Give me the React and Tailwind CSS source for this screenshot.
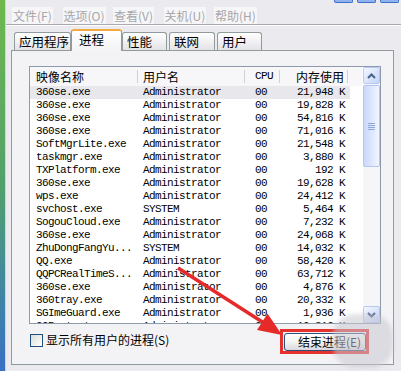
import { Fragment } from 'react';

const rows = [
  ['360se.exe', 'Administrator', '00', '21,948 K'],
  ['360se.exe', 'Administrator', '00', '19,828 K'],
  ['360se.exe', 'Administrator', '00', '54,816 K'],
  ['360se.exe', 'Administrator', '00', '71,016 K'],
  ['SoftMgrLite.exe', 'Administrator', '00', '21,548 K'],
  ['taskmgr.exe', 'Administrator', '00', '3,880 K'],
  ['TXPlatform.exe', 'Administrator', '00', '192 K'],
  ['360se.exe', 'Administrator', '00', '19,628 K'],
  ['wps.exe', 'Administrator', '00', '24,412 K'],
  ['svchost.exe', 'SYSTEM', '00', '5,464 K'],
  ['SogouCloud.exe', 'Administrator', '00', '7,232 K'],
  ['360se.exe', 'Administrator', '00', '24,068 K'],
  ['ZhuDongFangYu...', 'SYSTEM', '00', '14,032 K'],
  ['QQ.exe', 'Administrator', '00', '58,420 K'],
  ['QQPCRealTimeS...', 'Administrator', '00', '63,712 K'],
  ['360se.exe', 'Administrator', '00', '4,876 K'],
  ['360tray.exe', 'Administrator', '00', '20,332 K'],
  ['SGImeGuard.exe', 'Administrator', '00', '1,936 K'],
  ['QQProtect.exe', 'Administrator', '00', '10,316 K'],
];

const menus = ['文件(F)', '选项(O)', '查看(V)', '关机(U)', '帮助(H)'];

function Chevron({ down }) {
  return (
    <svg width="9" height="6" viewBox="0 0 9 6" aria-hidden>
      <polyline
        points={down ? '1,1 4.5,4.5 8,1' : '1,5 4.5,1.5 8,5'}
        fill="none"
        stroke="#4d6185"
        strokeWidth="2"
      />
    </svg>
  );
}

function ScrollButton({ down }) {
  return (
    <div className="flex h-[17px] items-center justify-center rounded-[2px] border border-[#b7c9ef] bg-gradient-to-br from-[#f4f7ff] to-[#c4d5fa]">
      <Chevron down={down} />
    </div>
  );
}

function Tab({ label, width, selected, className = '' }) {
  if (selected) {
    return (
      <div
        className={`relative z-10 -mb-px flex h-[22px] items-center whitespace-nowrap rounded-t-[3px] border-x border-t-2 border-x-[#919b9c] border-t-[#f3a942] bg-gradient-to-b from-white to-[#f3f2f5] pb-[2px] pl-[7px] text-[12.5px] text-black ${width} ${className}`}
      >
        {label}
      </div>
    );
  }
  return (
    <div
      className={`flex h-[18px] items-center whitespace-nowrap rounded-t-[3px] border border-b-0 border-[#919b9c] bg-gradient-to-b from-white to-[#e4e3e8] pl-[4px] pt-[1px] text-[12.5px] text-black ${width} ${className}`}
    >
      {label}
    </div>
  );
}

export default function App() {
  return (
    <div className="relative flex h-[371px] w-[401px] overflow-hidden bg-[#ebeaee] font-['Noto_Sans_CJK_SC',sans-serif]">
      <div className="w-[5px] shrink-0 bg-gradient-to-b from-[#6fb84c] via-[#52a06a] to-[#3a6fc4]" />
      <div className="flex min-w-0 flex-1 flex-col border-l border-[#d3d3da]">
        {/* bottom edge of the title bar buttons */}
        <div className="flex h-[3px] justify-end gap-[4px] pr-[2px]">
          <div className="w-[19px] rounded-b-[2px] border-x border-b border-[#3e6fc6] bg-[#8fb3ef]" />
          <div className="w-[19px] rounded-b-[2px] border-x border-b border-[#3e6fc6] bg-[#8fb3ef]" />
          <div className="w-[19px] rounded-b-[2px] border-x border-b border-[#3e6fc6] bg-[#8fb3ef]" />
        </div>

        <div className="flex h-[21px] items-center pl-[6px]">
          {menus.map((m) => (
            <div key={m} className="w-[50.5px] shrink-0">
              <span className="bg-[#f6f6f8] px-px text-[12px] leading-[16px] text-[#a6a6ab]">{m}</span>
            </div>
          ))}
        </div>
        <div className="h-[2px] border-t border-b border-t-[#a9a9af] border-b-white" />

        <div className="flex h-[24px] items-end pl-[8px] pt-[3px]">
          <Tab label="应用程序" width="w-[57px]" />
          <Tab label="进程" width="w-[51px]" selected />
          <Tab label="性能" width="w-[45px]" />
          <Tab label="联网" width="w-[46px]" className="ml-[2px]" />
          <Tab label="用户" width="w-[45px]" className="ml-[2px]" />
        </div>

        <div className="ml-[5px] h-[315px] w-[383px] border border-[#919b9c] bg-[#f3f2f5] pl-[17px] pt-[15px]">
          <div className="flex h-[258px] w-[352px] border border-[#8e9aab] bg-white">
            <div className="w-[332px] overflow-hidden">
              <div className="flex h-[19px] items-center bg-[#f7f7f9] text-[12px] text-black">
                <div className="w-[108px] border-r border-[#d0d0d6] pl-[6px] leading-[13px]">映像名称</div>
                <div className="w-[107px] border-r border-[#d0d0d6] pl-[5px] leading-[13px]">用户名</div>
                <div className="w-[35px] border-r border-[#d0d0d6] pl-[10px] font-['Liberation_Mono',monospace] text-[11px] leading-[13px] tracking-[-0.6px]">
                  CPU
                </div>
                <div className="w-[68px] border-r border-[#d0d0d6] pr-[3px] text-right leading-[13px]">内存使用</div>
              </div>
              {rows.map((r, i) => (
                <div
                  key={i}
                  className={`flex h-[13px] w-[320px] items-center font-['Liberation_Mono',monospace] text-[11px] leading-[13px] tracking-[-0.6px] text-black ${
                    i === 0 ? 'bg-[#e8e7ec]' : ''
                  }`}
                >
                  <div className="w-[108px] whitespace-nowrap pl-[6px]">{r[0]}</div>
                  <div className="w-[107px] whitespace-nowrap pl-[5px]">{r[1]}</div>
                  <div className="w-[35px] pl-[10px]">{r[2]}</div>
                  <div className="w-[70px] whitespace-pre pr-[5px] text-right">{r[3]}</div>
                </div>
              ))}
            </div>
            <div className="ml-px flex w-[17px] flex-col bg-[#f6f6f8]">
              <ScrollButton />
              <div className="mt-px flex h-[82px] flex-col items-center justify-center gap-[1px] rounded-[2px] border border-[#b2c5ef] bg-gradient-to-r from-[#c9d9fb] via-[#dce6fd] to-[#f2f6ff]">
                {[0, 1, 2, 3].map((k) => (
                  <Fragment key={k}>
                    <div className="h-px w-[7px] bg-[#8fa7d9]" />
                  </Fragment>
                ))}
              </div>
              <div className="flex-1" />
              <ScrollButton down />
            </div>
          </div>

          <div className="mt-[9px] flex w-[352px] items-start">
            <div className="flex items-center pl-px">
              <div className="h-[13px] w-[13px] border border-[#1f4f7e] bg-gradient-to-br from-[#dcdcd6] to-white" />
              <span className="ml-[3px] text-[12px] leading-[14px] text-black">显示所有用户的进程(S)</span>
            </div>
            <div className="ml-auto mr-[15px] flex h-[18px] w-[82px] items-center rounded-[3px] border border-[#2b4f7a] bg-gradient-to-b from-white via-[#f4f4f2] to-[#d8d8df] pl-[13px] text-[12px] leading-[14px] text-black">
              结束进程(E)
            </div>
          </div>
        </div>
      </div>

      {/* annotation: red arrow + red box */}
      <svg
        className="pointer-events-none absolute left-0 top-0"
        width="401"
        height="371"
        viewBox="0 0 401 371"
        aria-hidden
      >
        <line x1="178" y1="268" x2="264" y2="323" stroke="#e62a2a" strokeWidth="3.5" />
        <polygon points="282,335 257,330 267.5,313.5" fill="#e62a2a" />
      </svg>
      <div className="pointer-events-none absolute left-[280px] top-[329px] h-[25px] w-[89px] border-[3px] border-[#e5302c]" />
      {/* watermark blob */}
      <div className="pointer-events-none absolute left-[333px] top-[314px] h-[54px] w-[60px] rounded-[22px] bg-[#c8c8d2]/55 blur-[2px]" />
    </div>
  );
}
